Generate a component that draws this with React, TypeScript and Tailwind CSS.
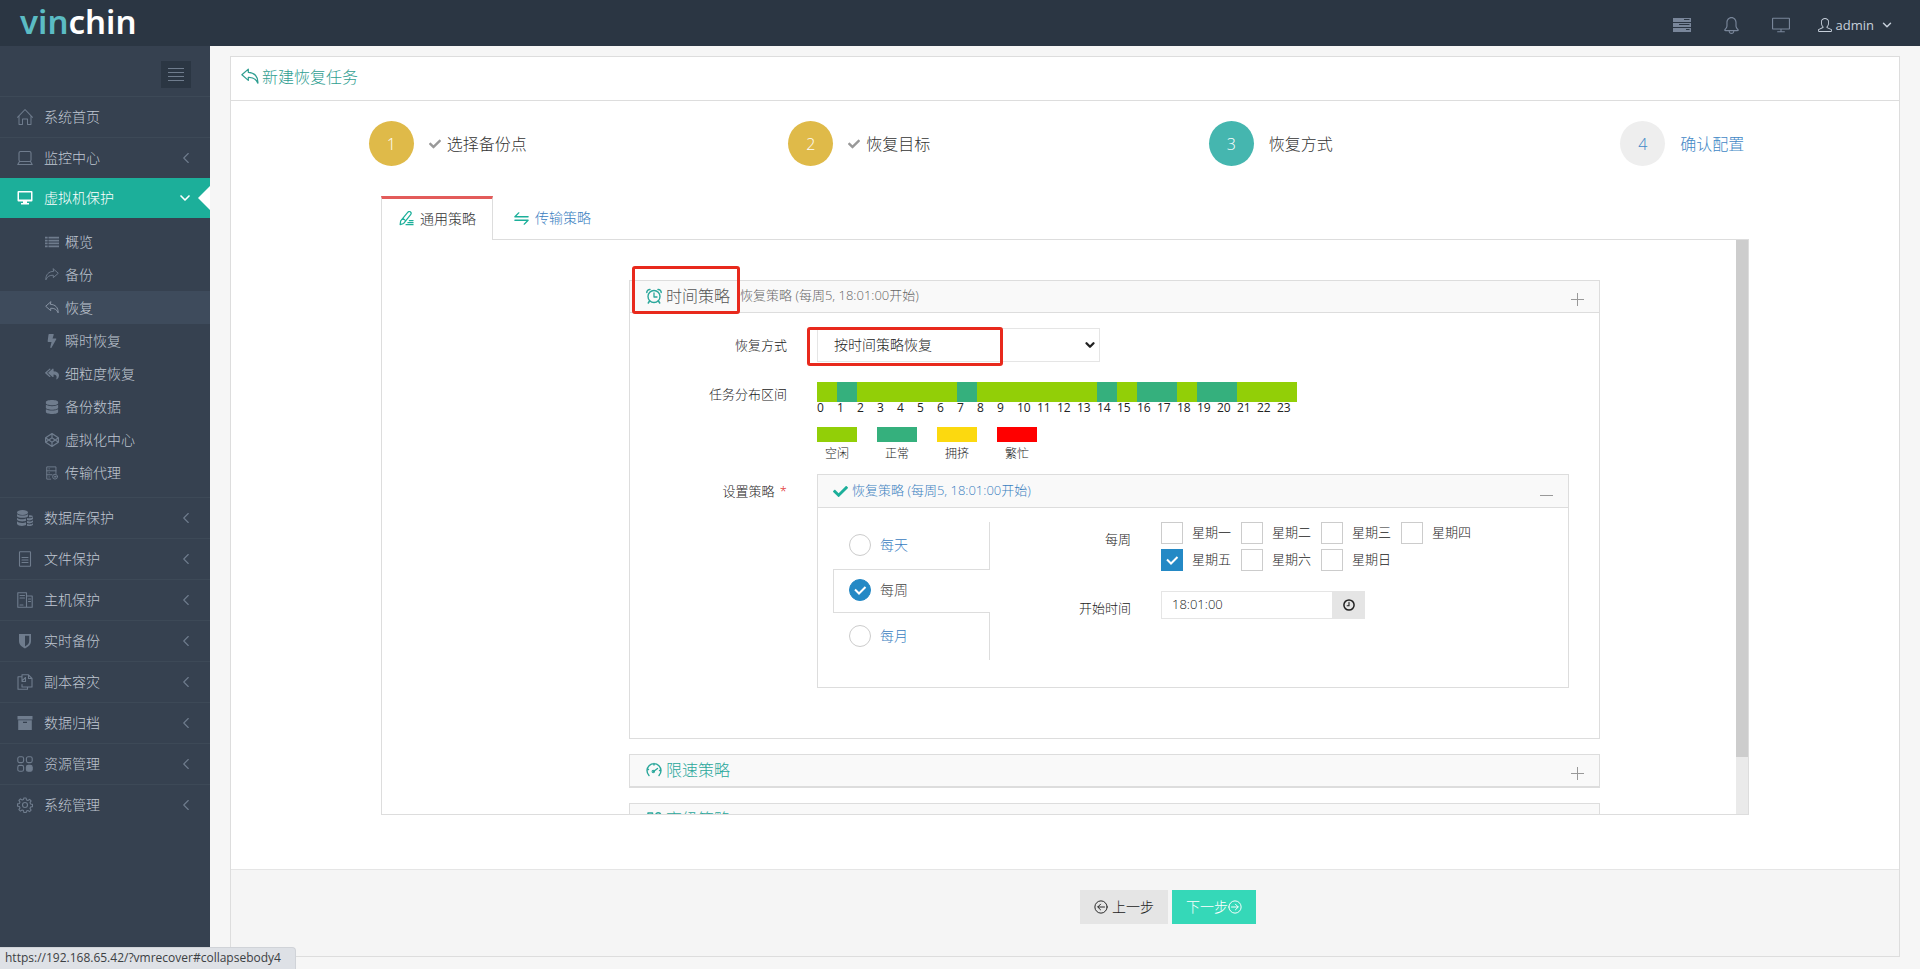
import { useState, type ReactNode } from "react";
import { FaBolt, FaCheck, FaCodepen, FaDatabase, FaReplyAll } from "react-icons/fa";
import { SlBell, SlHome, SlScreenDesktop, SlUser } from "react-icons/sl";
import { ChevronDown, ChevronLeft } from "lucide-react";
import clsx from "clsx";

type IconProps = { className?: string; children?: ReactNode; fill?: boolean };

// 16x16 の共通アイコン枠
const Svg = ({ className, children, fill }: IconProps) => (
  <svg
    viewBox="0 0 16 16"
    className={clsx("shrink-0", className)}
    fill={fill ? "currentColor" : "none"}
    stroke={fill ? "none" : "currentColor"}
    strokeWidth={1.1}
    strokeLinejoin="round"
    strokeLinecap="round"
    aria-hidden="true"
  >
    {children}
  </svg>
);

const ReplyIcon = ({ className }: IconProps) => (
  <Svg className={className}>
    <path d="M6.500 1 .8 6l5.700 5V8.300c4.200-.2 6.800 1.200 8.500 5.200.3-6-3.200-9.500-8.500-9.700Z" />
  </Svg>
);

const ShareIcon = ({ className }: IconProps) => (
  <Svg className={className}>
    <path d="M9.500 1 15.200 6l-5.700 5V8.300C5.300 8.100 2.700 9.500 1 13.500.7 7.500 4.200 4 9.500 3.800Z" />
  </Svg>
);

const LaptopIcon = ({ className }: IconProps) => (
  <Svg className={className}>
    <rect x="2" y="1.500" width="12" height="10" rx="1.500" />
    <path d="M2.500 11.500.8 14.500h14.400l-1.700-3" />
  </Svg>
);

const DesktopIcon = ({ className }: IconProps) => (
  <Svg className={className} fill>
    <path d="M1.500 1h13a1 1 0 0 1 1 1v8.500a1 1 0 0 1-1 1H10v1.500h2v1.500H4V13h2v-1.500H1.500a1 1 0 0 1-1-1V2a1 1 0 0 1 1-1ZM2 2.500V9.500h12v-7Z" fillRule="evenodd" />
  </Svg>
);

const ListIcon = ({ className }: IconProps) => (
  <Svg className={className} fill>
    <path d="M0 2h3v2H0zM4 2h12v2H4zM0 5.300h3v2H0zM4 5.300h12v2H4zM0 8.600h3v2H0zM4 8.600h12v2H4zM0 12h3v2H0zM4 12h12v2H4z" />
  </Svg>
);

const AgentIcon = ({ className }: IconProps) => (
  <Svg className={className}>
    <path d="M6.500 15H2V1h10.500v7.500M2 5.500h10.500M2 10h6M4.500 3.300h.5M4.500 7.800h.5M4.500 12.500h.5" />
    <circle cx="11.500" cy="12.200" r="2.800" />
    <circle cx="11.500" cy="12.200" r=".8" />
  </Svg>
);

const DatabasesIcon = ({ className }: IconProps) => (
  <Svg className={className} fill>
    <ellipse cx="5.500" cy="2.500" rx="5.500" ry="2.500" />
    <path d="M0 4c1.500 2 9.500 2 11 0v2.200C9.500 8.200 1.500 8.200 0 6.200ZM0 7.700c1.500 2 7 1.900 9 .9v2.200c-2 1-7.500.9-9-1ZM0 11.300c1.500 2 7 1.900 9 .9v2.900c-2 1.200-8 1.200-9-1ZM10 8c2 .6 4.500.3 6-1v2c-1.200 1.500-4.500 1.700-6 1ZM10 11c2 .8 4.800.5 6-.8v1.900c-1.200 1.500-4.500 1.700-6 1ZM10 14c2 .7 4.800.5 6-.8v1.600c-1.200 1.500-4.500 1.600-6 1ZM12 5.200c2 0 3.500.4 4 1-.5.600-2 1-4 1Z" />
  </Svg>
);

const FileIcon = ({ className }: IconProps) => (
  <Svg className={className}>
    <rect x="2.500" y=".8" width="11" height="14.400" rx=".5" />
    <path d="M5 6.500h6M5 9h6M5 11.500h6" />
  </Svg>
);

const HostIcon = ({ className }: IconProps) => (
  <Svg className={className}>
    <path d="M9.500 15.300H.8V.8h8.700zM9.500 4h5.700v11.300H9.500M3 3.500h4.500M3 6h4.500M3 13h3M11.500 7h2M11.500 9.500h2" />
  </Svg>
);

const ShieldIcon = ({ className }: IconProps) => (
  <Svg className={className} fill>
    <path d="M2 1h12v7c0 3.500-2.500 5.700-6 7.500C4.500 13.700 2 11.500 2 8Zm6 1.800V13.500c2.500-1.500 4.200-3 4.200-5.500V2.800Z" fillRule="evenodd" />
  </Svg>
);

const CopyIcon = ({ className }: IconProps) => (
  <Svg className={className}>
    <path d="M5 2.800H1v12.500h9.500v-2.300M5 10.500V13h10V4.500L11.500.8H5v6L8.500 3.500M11.500.8v3.700H15M8.500 3.500v4H5" />
  </Svg>
);

const ArchiveIcon = ({ className }: IconProps) => (
  <Svg className={className} fill>
    <path d="M.5 1h15v3.500H.5zM1.200 5.300h13.600V15H1.200ZM6 6.700v1.200h4V6.700Z" fillRule="evenodd" />
  </Svg>
);

const BlocksIcon = ({ className }: IconProps) => (
  <Svg className={className}>
    <rect x=".8" y=".8" width="5.800" height="5.800" rx="1.800" />
    <rect x="9.400" y=".8" width="5.800" height="5.800" rx="1.800" />
    <rect x=".8" y="9.400" width="5.800" height="5.800" rx="1.800" />
    <rect x="9.400" y="9.400" width="5.800" height="5.800" rx="1.800" fill="currentColor" />
  </Svg>
);

const GearIcon = ({ className }: IconProps) => (
  <Svg className={className}>
    <path d="M6.900 1h2.200l.4 1.900 1.400.6 1.700-1.100 1.500 1.500-1.100 1.700.6 1.400 1.900.4v2.200l-1.900.4-.6 1.400 1.100 1.700-1.500 1.500-1.700-1.100-1.400.6L9.100 15.500H6.900l-.4-1.900-1.400-.6-1.700 1.100-1.500-1.500L3 10.900l-.6-1.400L.5 9.100V6.900l1.900-.4L3 5.100 1.900 3.400l1.500-1.500L5.100 3l1.400-.6Z" />
    <circle cx="8" cy="8" r="2.500" />
  </Svg>
);

const TasksIcon = ({ className }: IconProps) => (
  <svg viewBox="0 0 18 14" className={className} fill="currentColor" aria-hidden="true">
    <path d="M0 0h18v4H0zM0 5h18v4H0zM0 10h18v4H0z" />
    <path d="M11 1.500h5.500M6 6.500h10.500M13 11.500h3.500" stroke="#2b3643" />
  </svg>
);

const PenIcon = ({ className }: IconProps) => (
  <Svg className={className}>
    <path d="m1.200 14.500.6-4L9.500 1.300c.9-1 2-.9 2.800-.2.900.8.900 1.800.1 2.800L5 13.300ZM4 7.800l3 2.500M11 10.200h4M9.500 12.400h5.500M7.500 14.600H15" strokeWidth={1.300} />
  </Svg>
);

const TransferIcon = ({ className }: IconProps) => (
  <Svg className={className}>
    <path d="M5 2 1 6.200h14M1 9.800h14L11 14" strokeWidth={1.500} />
  </Svg>
);

const AlarmIcon = ({ className }: IconProps) => (
  <Svg className={className}>
    <circle cx="8" cy="8.500" r="6" strokeWidth={1.400} />
    <path d="M8 5v4h3" strokeWidth={1.300} />
    <path d="m3.500 13-1.200 2M12.500 13l1.200 2M.8 4.500A3 3 0 0 1 4 1.500M15.200 4.500A3 3 0 0 0 12 1.500" strokeWidth={1.500} />
  </Svg>
);

const GaugeIcon = ({ className }: IconProps) => (
  <Svg className={className}>
    <path d="M3 13.500a7 7 0 1 1 10 0M8 1.500v1.500M1.500 7.500h1M13.500 8.500h1M7.500 9.500 11.500 6.500" strokeWidth={1.400} />
    <circle cx="7.300" cy="9.500" r="1.200" />
  </Svg>
);

const GridIcon = ({ className }: IconProps) => (
  <Svg className={className}>
    <path d="M2 2h4.500v4.500H2zM2 10h4.500v4.500H2zM10 10h4.500v4.500H10z" strokeWidth={1.500} />
    <circle cx="12.200" cy="4.200" r="2.500" strokeWidth={1.500} />
  </Svg>
);

const ArrowCircle = ({ right = false }: { right?: boolean }) => (
  <Svg className={clsx("size-[14px]", right && "rotate-180")}>
    <circle cx="8" cy="8" r="7" />
    <path d="M12 8H4.500M7.500 4.800 4.300 8l3.200 3.200" />
  </Svg>
);

const MENU_TOP = [
  { label: "系统首页", icon: SlHome, arrow: false },
  { label: "监控中心", icon: LaptopIcon, arrow: true },
];

const SUB_MENU = [
  { label: "概览", icon: ListIcon },
  { label: "备份", icon: ShareIcon },
  { label: "恢复", icon: ReplyIcon, active: true },
  { label: "瞬时恢复", icon: FaBolt },
  { label: "细粒度恢复", icon: FaReplyAll },
  { label: "备份数据", icon: FaDatabase },
  { label: "虚拟化中心", icon: FaCodepen },
  { label: "传输代理", icon: AgentIcon },
];

const MENU_BOTTOM = [
  { label: "数据库保护", icon: DatabasesIcon, arrow: true },
  { label: "文件保护", icon: FileIcon, arrow: true },
  { label: "主机保护", icon: HostIcon, arrow: true },
  { label: "实时备份", icon: ShieldIcon, arrow: true },
  { label: "副本容灾", icon: CopyIcon, arrow: true },
  { label: "数据归档", icon: ArchiveIcon, arrow: true },
  { label: "资源管理", icon: BlocksIcon, arrow: true },
  { label: "系统管理", icon: GearIcon, arrow: true },
];

const STEPS = [
  { label: "选择备份点", state: "done" },
  { label: "恢复目标", state: "done" },
  { label: "恢复方式", state: "active" },
  { label: "确认配置", state: "todo" },
];

const NORMAL_HOURS = [1, 7, 14, 16, 17, 19, 20];

const LEGEND = [
  { label: "空闲", color: "bg-[#92cf07]" },
  { label: "正常", color: "bg-[#35b07d]" },
  { label: "拥挤", color: "bg-[#fcd90f]" },
  { label: "繁忙", color: "bg-[#ff0000]" },
];

const WEEK = ["星期一", "星期二", "星期三", "星期四", "星期五", "星期六", "星期日"];

const MenuItem = ({ item }: { item: (typeof MENU_TOP)[number] }) => {
  const Icon = item.icon;
  return (
    <li className="border-t border-[#3d4957]">
      <a href="#" className="flex h-10 items-center pr-[15px] pl-[17px] text-sm text-[#c0c8d3]">
        <Icon className="size-4 text-[#6f7c8d]" />
        <span className="ml-[11px]">{item.label}</span>
        {item.arrow && <ChevronLeft className="ml-auto size-[18px] text-[#6f7c8d]" strokeWidth={1.5} />}
      </a>
    </li>
  );
};

const Sidebar = () => (
  <aside className="w-[210px] shrink-0 bg-[#364150]">
    <div className="flex h-[50px] items-end justify-end pr-[19px] pb-2">
      <button type="button" aria-label="折叠菜单" className="flex h-[27px] w-[30px] flex-col items-center justify-center gap-[3px] bg-[#2b3643]">
        <span className="h-px w-4 bg-[#6f7c8d]" />
        <span className="h-px w-4 bg-[#6f7c8d]" />
        <span className="h-px w-4 bg-[#6f7c8d]" />
        <span className="h-px w-4 bg-[#6f7c8d]" />
      </button>
    </div>
    <ul>
      {MENU_TOP.map((item) => (
        <MenuItem key={item.label} item={item} />
      ))}
      <li>
        <a href="#" className="relative flex h-10 items-center bg-[#1caf9a] pr-[17px] pl-[17px] text-sm text-white">
          <DesktopIcon className="size-4" />
          <span className="ml-[11px]">虚拟机保护</span>
          <ChevronDown className="ml-auto size-4" strokeWidth={2.5} />
          <span className="absolute top-2 right-0 border-y-12 border-r-12 border-y-transparent border-r-white" />
        </a>
        <ul className="pt-[7px] pb-2">
          {SUB_MENU.map(({ label, icon: Icon, active }) => (
            <li key={label}>
              <a
                href="#"
                className={clsx("flex h-[33px] items-center pl-[45px] text-sm text-[#c0c8d3]", active && "bg-[#3e4b5c]")}
              >
                <Icon className={clsx("size-[14px]", active ? "text-[#8b97a7]" : "text-[#6f7c8d]")} />
                <span className="ml-[6px]">{label}</span>
              </a>
            </li>
          ))}
        </ul>
      </li>
      {MENU_BOTTOM.map((item) => (
        <MenuItem key={item.label} item={item} />
      ))}
    </ul>
  </aside>
);

const Topbar = () => (
  <header className="flex h-[46px] items-center bg-[#2b3643] pr-[26px] pl-5">
    <a href="#" className="pb-0.5 text-[33px] leading-8 font-semibold text-white" style={{ fontFamily: '"Noto Sans", sans-serif' }}>
      <span className="text-[#5bbcc4]">vin</span>chin
    </a>
    <div className="ml-auto flex items-center pt-1 text-[#79869a]">
      <button type="button" aria-label="任务">
        <TasksIcon className="h-[14px] w-[18px]" />
      </button>
      <button type="button" aria-label="通知" className="ml-[32px]">
        <SlBell className="size-[17px]" />
      </button>
      <button type="button" aria-label="屏幕" className="ml-[32px]">
        <SlScreenDesktop className="size-[18px]" />
      </button>
      <button type="button" className="ml-[28px] flex items-center text-[13px] leading-4 font-normal text-[#c6cfda]">
        <SlUser className="size-[14px]" />
        <span className="ml-1">admin</span>
        <ChevronDown className="ml-[6px] size-[14px]" strokeWidth={2.5} />
      </button>
    </div>
  </header>
);

const Steps = () => (
  <ol className="grid grid-cols-4 px-[11px] pt-5">
    {STEPS.map((step, i) => (
      <li key={step.label}>
        <a
          href="#"
          className={clsx(
            "flex h-[45px] items-center justify-center text-base",
            step.state === "todo" ? "text-[#4288c6]" : "text-[#333]",
          )}
        >
          <span
            className={clsx(
              "mr-[15px] flex size-[45px] items-center justify-center rounded-full",
              step.state === "done" && "bg-[#dfba49] text-white",
              step.state === "active" && "bg-[#45b6af] text-white",
              step.state === "todo" && "bg-[#eee]",
            )}
          >
            {i + 1}
          </span>
          {step.state === "done" && <FaCheck className="mr-[6px] size-3 text-[#999]" />}
          {step.label}
        </a>
      </li>
    ))}
  </ol>
);

type PanelProps = {
  title: string;
  icon: ReactNode;
  summary?: string;
  className?: string;
  children?: ReactNode;
};

const Panel = ({ title, icon, summary, className, children }: PanelProps) => (
  <section className="relative mb-[15px] border border-[#ddd]">
    <h3 className={clsx("flex h-8 items-center border-b border-[#ddd] bg-[#f9f9f9] pr-[15px] pb-0.5 pl-4 text-base", className)}>
      {icon}
      <span className="ml-1">{title}</span>
      {summary && <span className="ml-[10px] text-[13px] text-[#666]">{summary}</span>}
      <button type="button" aria-label="展开" className="ml-auto pt-2">
        <svg viewBox="0 0 13 13" className="size-[13px]" stroke="#999" aria-hidden="true">
          <path d="M0 6.500h13M6.500 0v13" />
        </svg>
      </button>
    </h3>
    {children}
  </section>
);

type TickProps = {
  id: string;
  type: "radio" | "checkbox";
  checked: boolean;
  onChange: () => void;
};

const Tick = ({ id, type, checked, onChange }: TickProps) => (
  <span className="relative size-[22px] shrink-0">
    <input
      id={id}
      type={type}
      name={type === "radio" ? "cycle" : id}
      checked={checked}
      onChange={onChange}
      className={clsx(
        "block size-[22px] appearance-none border",
        type === "radio" && "rounded-full",
        checked ? "border-[#2489c5] bg-[#2489c5]" : "border-[#ccc] bg-white",
      )}
    />
    {checked && (
      <svg viewBox="0 0 22 22" className="pointer-events-none absolute inset-0 size-[22px]" fill="none" stroke="#fff" strokeWidth={2} aria-hidden="true">
        <path d="m6 10.500 4 4 6.500-6.500" />
      </svg>
    )}
  </span>
);

const SUMMARY = "恢复策略 (每周5, 18:01:00开始)";

const StrategyBox = () => {
  const [cycle, setCycle] = useState("每周");
  const [days, setDays] = useState<string[]>(["星期五"]);

  const toggleDay = (day: string) =>
    setDays((prev) => (prev.includes(day) ? prev.filter((d) => d !== day) : [...prev, day]));

  return (
    <div className="mt-3 border border-[#ddd]">
      <div className="flex h-[33px] items-center border-b border-[#ddd] bg-[#f9f9f9] px-[15px]">
        <FaCheck className="size-[15px] text-[#1caf9a]" />
        <a href="#" className="ml-1 text-[13px] text-[#3a80bf]">
          {SUMMARY}
        </a>
        <button type="button" aria-label="收起" className="ml-auto pt-2">
          <span className="block h-px w-[13px] bg-[#999]" />
        </button>
      </div>
      <div className="flex px-[15px] pt-[14px] pb-[27px]">
        <div className="w-[157px] shrink-0 text-sm">
          {["每天", "每周", "每月"].map((name) => {
            const active = name === cycle;
            return (
              <div
                key={name}
                className={clsx(
                  "flex items-center border-[#ddd] pb-0.5",
                  active ? "h-11 border-y border-l pl-[15px]" : "h-[47px] border-r pl-4",
                )}
              >
                <Tick id={name} type="radio" checked={active} onChange={() => setCycle(name)} />
                <label htmlFor={name} className={clsx("ml-[9px]", active ? "text-[#444]" : "text-[#3a80bf]")}>
                  {name}
                </label>
              </div>
            );
          })}
        </div>
        <div className="grid flex-1 grid-cols-[141px_1fr] content-start gap-x-[30px] gap-y-5 text-[13px]">
          <span className="text-right leading-[34px]">每周</span>
          <div className="grid grid-cols-[repeat(4,80px)] gap-y-[5px]">
            {WEEK.map((day) => (
              <div key={day} className="flex h-[22px] items-center">
                <Tick id={day} type="checkbox" checked={days.includes(day)} onChange={() => toggleDay(day)} />
                <label htmlFor={day} className="ml-[9px]">
                  {day}
                </label>
              </div>
            ))}
          </div>
          <label htmlFor="start" className="text-right leading-[34px]">
            开始时间
          </label>
          <div className="flex h-7">
            <input id="start" type="text" defaultValue="18:01:00" className="w-[172px] border border-[#e5e5e5] px-[10px] text-[13px] text-[#222]" />
            <button type="button" aria-label="选择时间" className="flex w-8 items-center justify-center bg-[#e5e5e5]">
              <Svg className="size-3">
                <circle cx="8" cy="8" r="6.800" strokeWidth={2} />
                <path d="M8 4.500V9H5.500" strokeWidth={1.500} />
              </Svg>
            </button>
          </div>
        </div>
      </div>
    </div>
  );
};

const TimeStrategy = () => (
  <Panel title="时间策略" icon={<AlarmIcon className="size-4 text-[#2aa79b]" />} summary={SUMMARY} className="text-[#555]">
    {/* 标注框 */}
    <span className="absolute -top-[15px] left-[2px] h-12 w-[108px] rounded-[3px] border-3 border-[#e8291c]" />
    <div className="grid grid-cols-[157px_1fr] gap-x-[30px] pt-[15px] pr-[30px] pb-[50px] text-[13px]">
      <label htmlFor="mode" className="text-right leading-[34px]">
        恢复方式
      </label>
      <div className="relative mb-5 h-[34px] w-[283px]">
        <select id="mode" className="size-full appearance-none border border-[#e5e5e5] bg-white pl-4 text-sm text-[#222]">
          <option>按时间策略恢复</option>
        </select>
        <ChevronDown className="pointer-events-none absolute top-[10px] right-[3px] size-[14px]" strokeWidth={4} />
        <span className="pointer-events-none absolute -top-px -left-[10px] h-[39px] w-[196px] rounded-[3px] border-3 border-[#e8291c]" />
      </div>

      <span className="text-right leading-6">任务分布区间</span>
      <div className="text-xs">
        <div className="flex">
          {Array.from({ length: 24 }, (_, hour) => (
            <div key={hour} className="w-5">
              <div className={clsx("h-5", NORMAL_HOURS.includes(hour) ? "bg-[#35b07d]" : "bg-[#92cf07]")} />
              <div className="leading-3 font-normal">{hour}</div>
            </div>
          ))}
        </div>
        <ul className="mt-[13px] flex gap-5">
          {LEGEND.map(({ label, color }) => (
            <li key={label} className="w-10 text-center">
              <div className={clsx("h-[15px]", color)} />
              <div className="mt-1 leading-4">{label}</div>
            </li>
          ))}
        </ul>
      </div>

      <span className="mt-3 text-right leading-[34px]">
        设置策略 <span className="ml-0.5 text-[#e02222]">*</span>
      </span>
      <StrategyBox />
    </div>
  </Panel>
);

const App = () => (
  <div
    className="flex min-h-screen flex-col bg-[#f6f6f6] font-light text-[#222]"
    style={{ fontFamily: '"Open Sans", "Noto Sans CJK SC", sans-serif' }}
  >
    <Topbar />
    <div className="flex flex-1">
      <Sidebar />
      <main className="flex min-w-0 flex-1 flex-col px-5 pt-[10px] pb-3">
        <div className="flex flex-1 flex-col border border-[#ddd] bg-white">
          <h2 className="flex h-11 items-center border-b border-[#ddd] px-[10px] pb-1 text-base text-[#2f9e91]">
            <ReplyIcon className="size-[18px]" />
            <span className="ml-[3px]">新建恢复任务</span>
          </h2>
          <Steps />
          <div className="mx-[150px] mt-[30px] flex-1">
            <div className="flex text-sm">
              <a href="#" className="z-10 -mb-px flex h-11 w-[112px] items-center border-x border-t-3 border-x-[#ddd] border-t-[#e35b5a] bg-white pb-0.5 pl-[17px] text-[#333]">
                <PenIcon className="size-[15px] text-[#1caf9a]" />
                <span className="ml-[6px]">通用策略</span>
              </a>
              <a href="#" className="flex items-center pt-px pl-[21px] text-[#3a80bf]">
                <TransferIcon className="size-[15px] text-[#1caf9a]" />
                <span className="ml-[6px]">传输策略</span>
              </a>
            </div>
            <div className="flex h-[576px] overflow-hidden border border-[#ddd]">
              <div className="flex-1 overflow-hidden pt-10 pr-[136px] pl-[247px]">
                <TimeStrategy />
                <Panel title="限速策略" icon={<GaugeIcon className="size-4" />} className="text-[#2aa79b]" />
                <Panel title="高级策略" icon={<GridIcon className="size-4" />} className="text-[#2aa79b]" />
              </div>
              <div className="w-3 bg-[#eaeaea]">
                <div className="h-[517px] bg-[#cdcdcd]" />
              </div>
            </div>
          </div>
          <footer className="flex h-[87px] gap-1 border-t border-[#e5e5e5] bg-[#f5f5f5] pt-5 pl-[849px] text-sm">
            <button type="button" className="flex h-[34px] w-[88px] items-center justify-center gap-1 bg-[#e5e5e5] text-[#222]">
              <ArrowCircle />
              上一步
            </button>
            <button type="button" className="flex h-[34px] w-[84px] items-center justify-center bg-[#35d8b8] text-white">
              下一步
              <ArrowCircle right />
            </button>
          </footer>
        </div>
      </main>
    </div>
    {/* 浏览器状态提示 */}
    <div className="fixed bottom-0 left-0 h-[22px] w-[296px] rounded-tr border-t border-r border-[#d0d3d8] bg-[#dee1e6] pl-[5px] text-xs leading-5 font-normal text-[#3c4043]">
      https://192.168.65.42/?vmrecover#collapsebody4
    </div>
  </div>
);

export default App;
